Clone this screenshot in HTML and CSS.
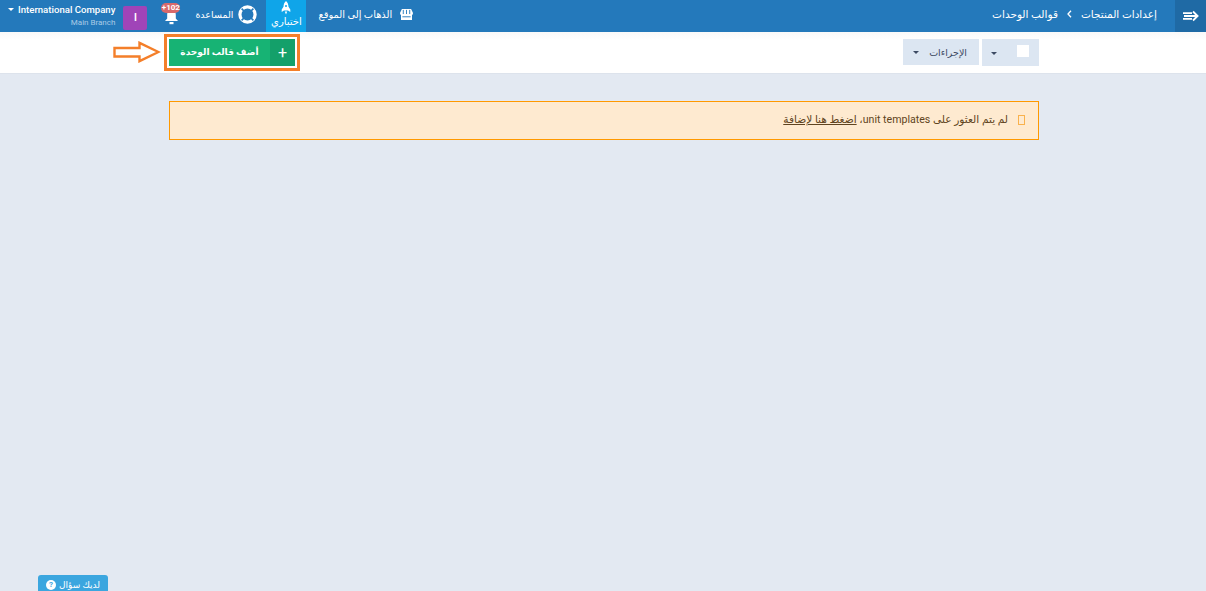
FILE: index.html
```html
<!DOCTYPE html>
<html lang="ar" dir="rtl">
<head>
<meta charset="utf-8">
<title>قوالب الوحدات</title>
<link rel="stylesheet" href="styles.css">
</head>
<body>
<header class="topbar">
  <div class="top-start">
    <button class="toggle" aria-label="menu">
      <svg width="16" height="12" viewBox="0 0 16 12"><path d="M0 3.200h9M0 8.800h9" stroke="#fff" stroke-width="1.800" fill="none"/><path d="M1 6h13M10 1.500 14.600 6 10 10.500" stroke="#fff" stroke-width="1.800" fill="none"/></svg>
    </button>
    <nav class="crumbs">
      <span>إعدادات المنتجات</span>
      <svg class="chev" width="5" height="8" viewBox="0 0 5 8"><path d="M4 .8 1 4l3 3.200" stroke="#fff" stroke-width="1.300" fill="none"/></svg>
      <span>قوالب الوحدات</span>
    </nav>
  </div>
  <div class="top-end">
    <a class="site-link">
      <svg width="13" height="11" viewBox="0 0 14 12"><path d="M2 0h10l2 4v1.200a1.400 1.400 0 0 1-1 1.300V12H1V6.500A1.400 1.400 0 0 1 0 5.200V4z" fill="#fff"/><path d="M3.500 1v4.500M7 1v4.500M10.500 1v4.500" stroke="#2479bb" stroke-width="1"/><path d="M2.500 8.500h9" stroke="#2479bb" stroke-width="1"/></svg>
      <span>الذهاب إلى الموقع</span>
    </a>
    <a class="trial">
      <svg width="10" height="14" viewBox="0 0 10 14"><path d="M5 0c1.700 1.500 2.500 3.500 2.500 5.800L9.300 8.500V11L7 9.600H3L.7 11V8.500l1.800-2.700C2.500 3.500 3.300 1.500 5 0z" fill="#fff"/><path d="M3.800 10.500h2.400L5 13.500z" fill="#fff"/><circle cx="5" cy="5" r="1" fill="#0fa5e9"/></svg>
      <span>اختباري</span>
    </a>
    <a class="help">
      <svg width="19" height="19" viewBox="0 0 20 20"><circle cx="10" cy="10" r="8" fill="none" stroke="#fff" stroke-width="3.400"/><path d="M3.800 3.800l3.800 3.800M16.200 3.800l-3.800 3.800M3.800 16.200l3.800-3.800M16.200 16.200l-3.800-3.800" stroke="#2479bb" stroke-width="1.700"/></svg>
      <span>المساعدة</span>
    </a>
    <a class="bell">
      <svg width="15" height="16" viewBox="0 0 15 16"><path d="M7.500 1c3 0 4.300 2.300 4.300 5v3.500l2.200 2.500H1l2.200-2.500V6c0-2.700 1.300-5 4.300-5z" fill="#fff"/><rect x="5.500" y="13" width="4" height="2.200" fill="#fff"/></svg>
      <b class="badge" dir="ltr">+102</b>
    </a>
    <span class="avatar">I</span>
    <div class="company">
      <div class="company-name"><span>International Company</span><i class="caret caret-light"></i></div>
      <div class="branch">Main Branch</div>
    </div>
  </div>
</header>

<section class="toolbar">
  <div class="toolbar-inner">
    <div class="tools">
      <div class="check-group"><span class="check"></span><i class="caret"></i></div>
      <button class="actions"><span>الإجراءات</span><i class="caret"></i></button>
    </div>
    <div class="add-wrap">
      <button class="add"><span class="plus">+</span><span class="add-label">أضف قالب الوحدة</span></button>
      <svg class="arrow" width="48" height="22" viewBox="0 0 48 22"><path d="M1.500 7h25V1.800L45.500 11 26.500 20.200V15.500h-25z" fill="#fff" stroke="#f47f2a" stroke-width="2.400"/></svg>
    </div>
  </div>
</section>

<main class="content">
  <div class="alert">
    <i class="tofu"></i>
    <p>لم يتم العثور على unit templates، <a>اضغط هنا لإضافة</a></p>
  </div>
</main>

<button class="question"><span>لديك سؤال</span><b class="qmark">?</b></button>
</body>
</html>
```
FILE: styles.css
```css
* { box-sizing: border-box; }
html, body { height: 100%; }
body {
  margin: 0;
  overflow: hidden;
  display: flex;
  flex-direction: column;
  background: #e3e9f2;
  color: #333;
  font: 11px Roboto, "DejaVu Sans", sans-serif;
}
button { font: inherit; border: 0; padding: 0; }
.topbar {
  flex: 0 0 32px;
  display: flex;
  justify-content: space-between;
  background: #2479bb;
  color: #fff;
}
.top-start, .top-end, .crumbs, .site-link, .help { display: flex; align-items: center; }
.toggle {
  width: 31px;
  height: 32px;
  background: #1f6aa5;
  display: flex;
  align-items: center;
  justify-content: center;
}
.crumbs { margin-right: 18px; gap: 9px; padding-bottom: 4px; font-size: 10.500px; }
.top-end { padding-left: 8px; }
.site-link { gap: 8px; margin-left: 12px; padding-bottom: 3px; font-size: 9.900px; }
.trial {
  width: 40px;
  height: 32px;
  background: #0fa5e9;
  margin-left: 9px;
  display: flex;
  flex-direction: column;
  align-items: center;
  padding-top: 1px;
  font-size: 10px;
  line-height: 13px;
}
.help { gap: 5px; margin-left: 14px; padding-bottom: 3px; font-size: 9.500px; }
.help svg { flex: none; }
.bell {
  position: relative;
  width: 20px;
  height: 32px;
  margin-left: 14px;
  display: flex;
  justify-content: center;
  padding-top: 9px;
}
.badge {
  position: absolute;
  top: 3px;
  left: 0;
  width: 19px;
  height: 10px;
  border-radius: 5px;
  background: #d8696b;
  color: #fff;
  font-size: 8px;
  line-height: 10px;
  text-align: center;
}
.avatar {
  width: 24px;
  height: 24px;
  margin-top: 3px;
  margin-left: 8px;
  border-radius: 2px;
  background: #a044b8;
  font-weight: 700;
  font-size: 10px;
  line-height: 24px;
  text-align: center;
}
.company { direction: ltr; text-align: right; }
.company-name {
  display: flex;
  flex-direction: row-reverse;
  justify-content: flex-end;
  align-items: center;
  gap: 4px;
  font-size: 9.600px;
  font-weight: 500;
  line-height: 13px;
}
.branch { font-size: 8px; line-height: 13px; color: #a9cbe6; }
.caret {
  display: inline-block;
  width: 0;
  height: 0;
  border: 3px solid transparent;
  border-top-color: #3c4a63;
  border-bottom: 0;
}
.caret-light { border-top-color: #fff; }
.toolbar {
  flex: 0 0 42px;
  background: linear-gradient(#f9f9f9, #fff 8px);
  border-bottom: 1px solid #dde3ec;
}
.toolbar-inner {
  margin: 0 167px 0 169px;
  display: flex;
  justify-content: space-between;
  align-items: flex-start;
}
.tools { display: flex; gap: 3px; padding-top: 7px; }
.check-group {
  width: 57px;
  height: 27px;
  background: #dce6f2;
  display: flex;
  align-items: flex-start;
  padding: 6px 10px 0 0;
  gap: 20px;
}
.check-group .caret { margin-top: 7px; }
.check { width: 12px; height: 12px; background: #fff; }
.actions {
  width: 76px;
  height: 26px;
  background: #dce6f2;
  color: #3c4a63;
  display: flex;
  align-items: center;
  justify-content: space-between;
  padding: 0 12px 0 10px;
  font-size: 9.500px;
}
.add-wrap { position: relative; padding-top: 7px; }
.add {
  display: flex;
  width: 126px;
  height: 27px;
  background: #17b374;
  color: #fff;
  outline: 3px solid #f47f2a;
  outline-offset: 2px;
  box-shadow: 0 0 0 2px #fff;
}
.plus {
  width: 25px;
  height: 27px;
  background: #14a06a;
  font-size: 16px;
  line-height: 28px;
  text-align: center;
}
.add-label {
  flex: 1;
  font-size: 9px;
  font-weight: 700;
  line-height: 27px;
  text-align: center;
}
.arrow { position: absolute; top: 9px; left: -56px; }
.content { flex: 1; padding: 27px 167px 0 167px; }
.alert {
  margin-left: 2px;
  height: 39px;
  background: #feead0;
  border: 1px solid #f90;
  display: flex;
  align-items: center;
  padding: 0 13px 2px 0;
  gap: 10px;
  color: #5f4420;
  font-size: 10.600px;
}
.alert p { margin: 0; }
.alert a { text-decoration: underline; }
.tofu {
  width: 7px;
  height: 10px;
  border: 1px solid #f9b24d;
}
.question {
  position: absolute;
  left: 38px;
  bottom: 0;
  width: 70px;
  height: 16px;
  display: flex;
  align-items: center;
  justify-content: center;
  gap: 3px;
  padding-top: 4px;
  background: #3ba6df;
  color: #fff;
  border-radius: 3px 3px 0 0;
  font-size: 9px;
}
.qmark {
  width: 10px;
  height: 10px;
  border-radius: 50%;
  background: #fff;
  color: #3ba6df;
  font-size: 8px;
  line-height: 10px;
  text-align: center;
}
```
